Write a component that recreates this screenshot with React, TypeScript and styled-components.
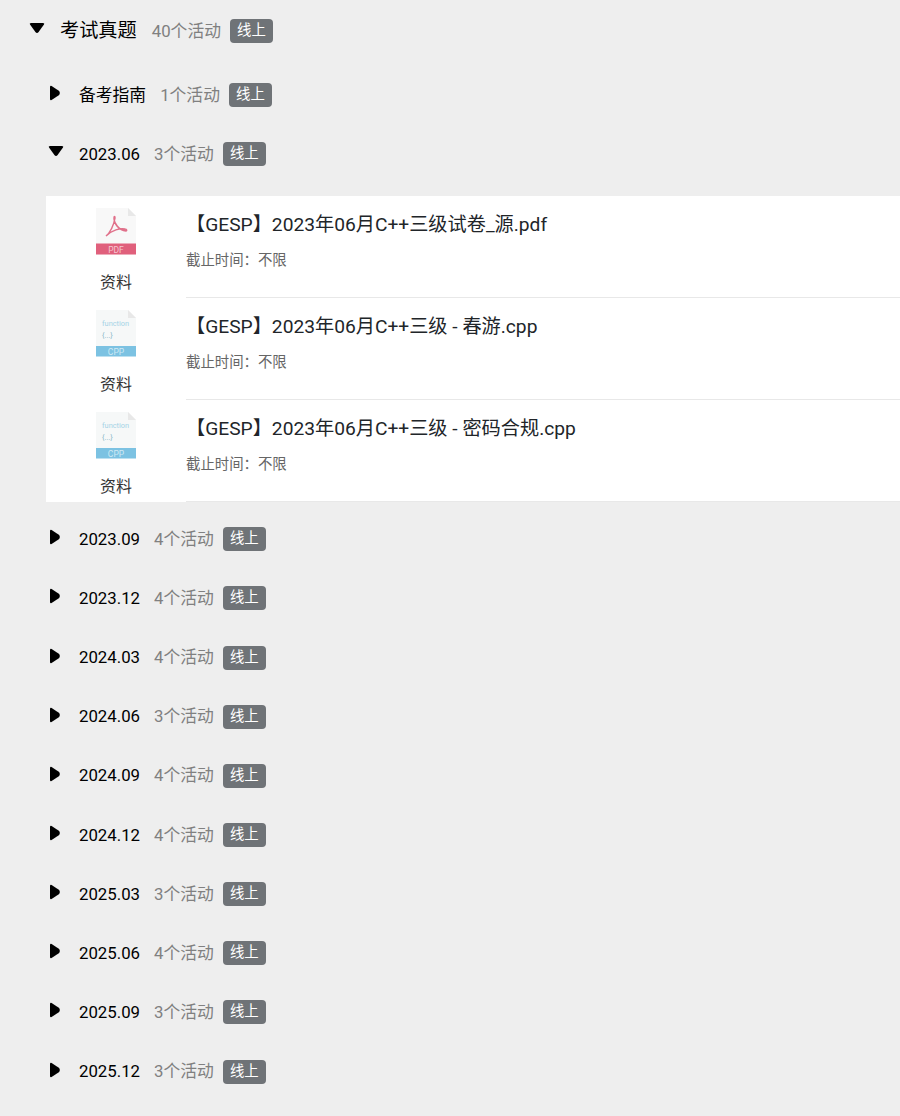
import React from "react";
import styled, { createGlobalStyle } from "styled-components";

const GlobalStyle = createGlobalStyle`
  html, body {
    margin: 0;
    padding: 0;
    background: #eeeeee;
    font-family: Roboto, "Noto Sans CJK SC", sans-serif;
  }
`;

const Page = styled.div`
  width: 900px;
  height: 1116px;
  overflow: hidden;
  background: #eeeeee;
`;

const TopRow = styled.div`
  display: flex;
  align-items: center;
  height: 58px;
  margin-bottom: 6px;
  padding-left: 29px;
`;

const SubRow = styled.div`
  display: flex;
  align-items: center;
  height: 59.15px;
  padding-left: 48px;
`;

const Label = styled.div`
  display: flex;
  align-items: center;
`;

const Texts = styled.div`
  display: flex;
  align-items: baseline;
`;

const Arrow = styled.svg<{ $shift: number }>`
  flex: none;
  width: 16px;
  height: 16px;
  margin-top: ${(p) => p.$shift}px;
  margin-right: 15px;
  fill: #000;
`;

const Title = styled.span<{ $top?: boolean }>`
  font-size: ${(p) => (p.$top ? "19.2px" : "16.8px")};
  color: #000;
  margin-right: ${(p) => (p.$top ? "15px" : "14px")};
`;

const Count = styled.span`
  font-size: 16.8px;
  color: #808080;
  margin-right: 9px;
`;

const Badge = styled.span`
  display: inline-block;
  width: 43px;
  height: 24px;
  margin-top: 3px;
  line-height: 24px;
  text-align: center;
  border-radius: 4px;
  background: #6f7377;
  color: #fff;
  font-size: 14.4px;
  font-weight: 400;
`;

const Panel = styled.div`
  margin: 14px 0 6px 46px;
  background: #fff;
`;

const Item = styled.div`
  display: flex;
  height: 102px;
`;

const IconCol = styled.div`
  flex: none;
  width: 140px;
  display: flex;
  flex-direction: column;
  align-items: center;
  padding-top: 12px;
  box-sizing: border-box;
`;

const IconLabel = styled.div`
  font-size: 16px;
  line-height: 22px;
  color: #333;
  margin-top: 16px;
`;

const Body = styled.div`
  flex: 1;
  padding-top: 17px;
  border-bottom: 1px solid #e8e8e8;
  box-sizing: border-box;
`;

const ItemTitle = styled.div`
  font-size: 19.2px;
  line-height: 24px;
  color: #212529;
`;

const Deadline = styled.div`
  font-size: 14.4px;
  line-height: 18px;
  color: #666;
  margin-top: 15px;
`;

const FileText = styled.text`
  font-family: Roboto, sans-serif;
`;

const RightArrow = () => (
  <Arrow viewBox="0 0 16 16" $shift={-1}>
    <path d="M2 2 Q2 0.4 3.6 0.9 L11.2 6 Q12.6 8 11.2 10 L3.6 15.1 Q2 15.6 2 14 Z" />
  </Arrow>
);

const DownArrow = ({ shift }: { shift: number }) => (
  <Arrow viewBox="0 0 16 16" $shift={shift}>
    <path d="M1.2 3.8 Q0 2 2 2 L14 2 Q16 2 14.8 3.8 L9.6 11 Q8 12.8 6.4 11 Z" />
  </Arrow>
);

const PdfIcon = () => (
  <svg width="42" height="48" viewBox="0 0 42 48">
    <path d="M1 0 H33 L41 8 V46.5 H1 Z" fill="#f8f8f8" />
    <path d="M33 0 L41 8 H33 Z" fill="#e8e8e8" />
    <rect x="1" y="35.5" width="40" height="11" fill="#e0607c" />
    <path
      d="M11 28 C15 25 19 17 20 10 C20 8 19 8 19 10 C19 16 24 22 31 23 C32 23 32 21 30 21 C25 20 17 22 11 28 Z"
      fill="none"
      stroke="#e0708a"
      strokeWidth="1.5"
    />
    <FileText x="21" y="44.5" fontSize="8.5" fill="#f6c6d0" textAnchor="middle">
      PDF
    </FileText>
  </svg>
);

const CppIcon = () => (
  <svg width="42" height="48" viewBox="0 0 42 48">
    <path d="M1 0 H33 L41 8 V46 H1 Z" fill="#f6f8f8" />
    <path d="M33 0 L41 8 H33 Z" fill="#e8e8e8" />
    <FileText x="7" y="16" fontSize="7.4" fill="#a5d3e6">
      function
    </FileText>
    <FileText x="7" y="28" fontSize="7.4" fill="#8cb8c8">
      {"{...}"}
    </FileText>
    <rect x="1" y="36" width="40" height="10.5" fill="#7cc2e2" />
    <FileText x="21" y="44.5" fontSize="8.5" fill="#cfe9f4" textAnchor="middle">
      CPP
    </FileText>
  </svg>
);

const files = [
  { name: "【GESP】2023年06月C++三级试卷_源.pdf", pdf: true },
  { name: "【GESP】2023年06月C++三级 - 春游.cpp", pdf: false },
  { name: "【GESP】2023年06月C++三级 - 密码合规.cpp", pdf: false },
];

const rest = [
  ["2023.09", 4],
  ["2023.12", 4],
  ["2024.03", 4],
  ["2024.06", 3],
  ["2024.09", 4],
  ["2024.12", 4],
  ["2025.03", 3],
  ["2025.06", 4],
  ["2025.09", 3],
  ["2025.12", 3],
] as const;

export default function App() {
  return (
    <Page>
      <GlobalStyle />
      <TopRow>
        <DownArrow shift={0} />
        <Label>
          <Texts>
            <Title $top>考试真题</Title>
            <Count>40个活动</Count>
          </Texts>
          <Badge>线上</Badge>
        </Label>
      </TopRow>
      <SubRow>
        <RightArrow />
        <Label>
          <Texts>
            <Title>备考指南</Title>
            <Count>1个活动</Count>
          </Texts>
          <Badge>线上</Badge>
        </Label>
      </SubRow>
      <SubRow>
        <DownArrow shift={-2} />
        <Label>
          <Texts>
            <Title>2023.06</Title>
            <Count>3个活动</Count>
          </Texts>
          <Badge>线上</Badge>
        </Label>
      </SubRow>
      <Panel>
        {files.map((f) => (
          <Item key={f.name}>
            <IconCol>
              {f.pdf ? <PdfIcon /> : <CppIcon />}
              <IconLabel>资料</IconLabel>
            </IconCol>
            <Body>
              <ItemTitle>{f.name}</ItemTitle>
              <Deadline>截止时间：不限</Deadline>
            </Body>
          </Item>
        ))}
      </Panel>
      {rest.map(([name, n]) => (
        <SubRow key={name}>
          <RightArrow />
          <Label>
            <Texts>
              <Title>{name}</Title>
              <Count>{n}个活动</Count>
            </Texts>
            <Badge>线上</Badge>
          </Label>
        </SubRow>
      ))}
    </Page>
  );
}
